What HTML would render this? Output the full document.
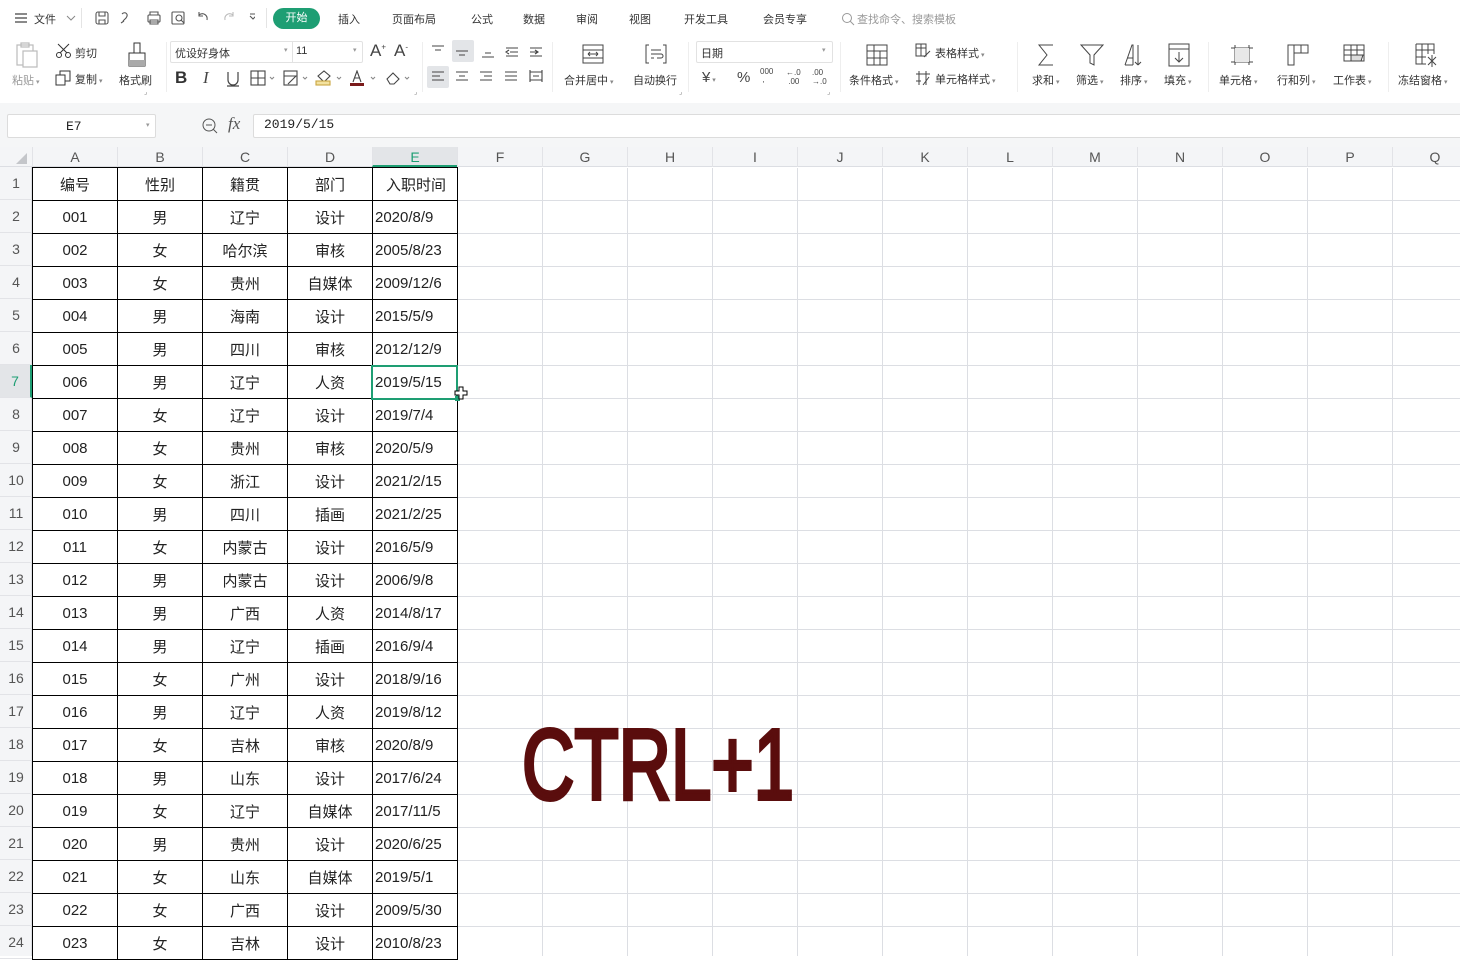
<!DOCTYPE html>
<html><head><meta charset="utf-8">
<style>
*{margin:0;padding:0;box-sizing:border-box}
body{width:1460px;height:956px;overflow:hidden;background:#fff;font-family:"Liberation Sans","Noto Sans CJK SC",sans-serif;color:#222;position:relative}
.a{position:absolute}
.t{position:absolute;font-size:11px;color:#333;white-space:nowrap}
.tab{position:absolute;top:11px;font-size:11px;color:#333}
.ic{position:absolute}
.ic svg{display:block}
.grid{position:absolute;left:33px;top:168px;width:1427px;height:788px;
background-image:repeating-linear-gradient(to right,transparent 0 84px,#dcdee3 84px 85px),repeating-linear-gradient(to bottom,transparent 0 32px,#dcdee3 32px 33px);}
.colh{position:absolute;top:147px;height:20px;background:#f4f5f7;border-bottom:1px solid #dcdee3}
.ch{position:absolute;top:0;width:85px;height:20px;text-align:center;font-size:14px;line-height:20px;color:#555;border-left:1px solid #e2e3e7}
.rowh{position:absolute;left:0;top:167px;width:32px;height:789px;background:#f4f5f7;border-right:1px solid #dcdee3}
.rh{position:absolute;left:0;width:32px;height:33px;line-height:33px;text-align:center;font-size:14px;color:#555;border-bottom:1px solid #e2e3e7}
table{position:absolute;left:32px;top:167px;border-collapse:collapse;table-layout:fixed}
td{border:1px solid #000;width:85px;height:33px;text-align:center;font-size:15px;padding:0;white-space:nowrap;overflow:hidden}
td:last-child{text-align:left;padding-left:2px}
tr:first-child td:last-child{text-align:center}
</style></head><body>
<div class="a" style="left:0;top:0;width:1460px;height:103px;background:#fff;box-shadow:0 2px 3px rgba(0,0,0,.06)"></div>
<div class="ic" style="left:14px;top:12px"><svg width="14" height="12"><path d="M1 2h12M1 6h12M1 10h12" stroke="#444" stroke-width="1.2"/></svg></div>
<div class="tab" style="left:34px">文件</div>
<div class="ic" style="left:66px;top:14px"><svg width="10" height="8"><path d="M1 2l4 4 4-4" stroke="#888" fill="none"/></svg></div>
<div class="a" style="left:81px;top:8px;width:1px;height:20px;background:#e4e4e4"></div>
<div class="ic" style="left:95px;top:10px"><svg width="160" height="16" fill="none" stroke="#555" stroke-width="1.1"><rect x="1" y="2" width="12" height="12" rx="2"/><path d="M4 2v4h6V2M4 14v-4h6v4"/><path d="M27 4c3-3 7 0 4 4l-3 3M26 13l3-2"/><rect x="53" y="5" width="12" height="7" rx="1"/><path d="M55 5V2h8v3M55 10h8v4h-8z"/><rect x="77" y="2" width="12" height="12" rx="1"/><circle cx="84" cy="8" r="3"/><path d="M86 10l3 3"/><path d="M104 5c4-3 9 0 8 5M104 2v4h4"/><path stroke="#bbb" d="M138 5c-4-3-9 0-8 5M138 2v4h-4"/><path d="M155 6l3 3 3-3M155 4h6"/></svg></div>
<div class="a" style="left:266px;top:8px;width:1px;height:20px;background:#e4e4e4"></div>
<div class="a" style="left:273px;top:8px;width:47px;height:21px;border-radius:11px;background:#1e9e73;color:#fff;font-size:11px;line-height:21px;text-align:center">开始</div>
<div class="tab" style="left:338px">插入</div>
<div class="tab" style="left:392px">页面布局</div>
<div class="tab" style="left:471px">公式</div>
<div class="tab" style="left:523px">数据</div>
<div class="tab" style="left:576px">审阅</div>
<div class="tab" style="left:629px">视图</div>
<div class="tab" style="left:684px">开发工具</div>
<div class="tab" style="left:763px">会员专享</div>
<div class="ic" style="left:841px;top:12px"><svg width="14" height="14" fill="none" stroke="#999"><circle cx="6" cy="6" r="4.5"/><path d="M9 9l4 4"/></svg></div>
<div class="tab" style="left:857px;color:#999">查找命令、搜索模板</div>

<div class="ic" style="left:16px;top:42px"><svg width="24" height="26" fill="none" stroke="#bbb" stroke-width="1.2"><rect x="1" y="3" width="16" height="20"/><rect x="7" y="9" width="14" height="16" fill="#fff"/><rect x="5" y="1" width="8" height="4"/></svg></div>
<div class="t" style="left:12px;top:72px;color:#999">粘贴<span style="font-size:7px"> ▾</span></div>
<div class="ic" style="left:55px;top:43px"><svg width="18" height="16" fill="none" stroke="#333"><circle cx="4" cy="12" r="2.5"/><circle cx="13" cy="12" r="2.5"/><path d="M5 10l9-9M12 10L3 1"/></svg></div>
<div class="t" style="left:75px;top:45px">剪切</div>
<div class="ic" style="left:55px;top:70px"><svg width="16" height="16" fill="none" stroke="#333"><rect x="1" y="5" width="9" height="10"/><path d="M5 5V1h10v10h-5"/></svg></div>
<div class="t" style="left:75px;top:71px">复制<span style="font-size:7px;color:#888"> ▾</span></div>
<div class="ic" style="left:126px;top:42px"><svg width="22" height="26" fill="none" stroke="#333"><path d="M8 1h6v10H8zM3 11h16v13H3z"/><rect x="3" y="18" width="16" height="6" fill="#aaa" stroke="none"/></svg></div>
<div class="t" style="left:119px;top:72px">格式刷</div>
<div class="t" style="left:144px;top:88px;font-size:7px;color:#888">⌟</div>
<div class="a" style="left:166px;top:42px;width:1px;height:50px;background:#eee"></div>
<div class="a" style="left:170px;top:41px;width:193px;height:22px;border:1px solid #e2e2e2;border-radius:2px"></div>
<div class="a" style="left:292px;top:41px;width:1px;height:22px;background:#e2e2e2"></div>
<div class="t" style="left:175px;top:45px">优设好身体</div>
<div class="t" style="left:284px;top:46px;font-size:7px;color:#999">▾</div>
<div class="t" style="left:296px;top:45px">11</div>
<div class="t" style="left:353px;top:46px;font-size:7px;color:#999">▾</div>
<div class="t" style="left:370px;top:41px;font-size:17px;color:#444">A<sup style="font-size:8px">+</sup></div>
<div class="t" style="left:394px;top:41px;font-size:17px;color:#444">A<sup style="font-size:8px">-</sup></div>
<div class="t" style="left:175px;top:68px;font-size:17px;font-weight:bold;color:#333">B</div>
<div class="t" style="left:203px;top:68px;font-size:17px;font-style:italic;color:#444;font-family:'Liberation Serif',serif">I</div>
<div class="ic" style="left:226px;top:71px"><svg width="14" height="16" fill="none" stroke="#444" stroke-width="1.2"><path d="M2 1v8a5 5 0 0010 0V1M1 15h12"/></svg></div>
<div class="ic" style="left:250px;top:70px"><svg width="160" height="18" fill="none" stroke="#444" stroke-width="1.1"><rect x="1" y="1" width="14" height="14"/><path d="M8 1v14M1 8h14"/><path d="M20 7l2 2 2-2" stroke="#888"/><rect x="34" y="1" width="13" height="14"/><path d="M34 6h13M38 14l8-8" /><path d="M53 7l2 2 2-2" stroke="#888"/><path d="M68 6l6-5 6 5-6 6z"/><rect x="66" y="11" width="14" height="4" fill="#f3e2a0" stroke="#c9a640"/><path d="M87 7l2 2 2-2" stroke="#888"/><path d="M103 12l4-11 4 11M105 8h5"/><rect x="100" y="13" width="14" height="3" fill="#7a1a1a" stroke="none"/><path d="M121 7l2 2 2-2" stroke="#888"/><path d="M137 9l6-6 6 6-5 5h-4z"/><path d="M155 7l2 2 2-2" stroke="#888"/></svg></div>
<div class="t" style="left:414px;top:88px;font-size:7px;color:#888">⌟</div>
<div class="a" style="left:422px;top:42px;width:1px;height:50px;background:#eee"></div>
<div class="a" style="left:452px;top:40px;width:22px;height:22px;background:#e3e5e8;border-radius:2px"></div>
<div class="a" style="left:427px;top:66px;width:22px;height:22px;background:#e3e5e8;border-radius:2px"></div>
<div class="ic" style="left:430px;top:44px"><svg width="120" height="44" fill="none" stroke="#444" stroke-width="1.1"><path d="M2 2h12M5 6h6M26 7h12M29 11h6M52 13h12M55 9h6M76 4h12M80 8h8M76 12h12M79 6l-3 2 3 2M100 4h12M100 8h8M100 12h12M105 6l3 2-3 2"/><path d="M2 28h12M2 32h8M2 36h12M26 28h12M29 32h6M26 36h12M50 28h12M54 32h8M50 36h12M75 28h12M75 32h12M75 36h12M100 26v12M112 26v12M100 28h12M100 36h12M103 32h6"/></svg></div>
<div class="a" style="left:552px;top:42px;width:1px;height:50px;background:#eee"></div>
<div class="ic" style="left:582px;top:44px"><svg width="22" height="20" fill="none" stroke="#444"><rect x="1" y="1" width="20" height="18"/><path d="M1 6h20M1 14h20M6 10h10M6 10l2-2M6 10l2 2M16 10l-2-2M16 10l-2 2"/></svg></div>
<div class="t" style="left:564px;top:72px">合并居中<span style="font-size:7px;color:#888"> ▾</span></div>
<div class="ic" style="left:645px;top:44px"><svg width="22" height="20" fill="none" stroke="#444"><path d="M4 1H1v18h3M18 1h3v18h-3M6 6h10M6 10h10a2 2 0 010 4h-4M6 14h3"/></svg></div>
<div class="t" style="left:633px;top:72px">自动换行</div>
<div class="t" style="left:679px;top:88px;font-size:7px;color:#888">⌟</div>
<div class="a" style="left:688px;top:42px;width:1px;height:50px;background:#eee"></div>
<div class="a" style="left:696px;top:41px;width:137px;height:22px;border:1px solid #e2e2e2;border-radius:2px"></div>
<div class="t" style="left:701px;top:45px">日期</div>
<div class="t" style="left:822px;top:46px;font-size:7px;color:#999">▾</div>
<div class="t" style="left:702px;top:69px;font-size:15px;color:#444">¥<span style="font-size:7px;color:#888"> ▾</span></div>
<div class="t" style="left:737px;top:69px;font-size:15px;color:#444">%</div>
<div class="t" style="left:760px;top:68px;font-size:8px;line-height:8px;color:#444">000<br>&nbsp;,</div>
<div class="t" style="left:786px;top:68px;font-size:8px;line-height:9px;color:#444">←.0<br>&nbsp;.00</div>
<div class="t" style="left:812px;top:68px;font-size:8px;line-height:9px;color:#444">.00<br>→.0</div>
<div class="t" style="left:827px;top:88px;font-size:7px;color:#888">⌟</div>
<div class="a" style="left:840px;top:42px;width:1px;height:50px;background:#eee"></div>
<div class="ic" style="left:866px;top:44px"><svg width="22" height="22" fill="none" stroke="#444"><rect x="1" y="1" width="20" height="20"/><path d="M1 7h20M1 14h20M8 1v20M14 7v14"/></svg></div>
<div class="t" style="left:849px;top:72px">条件格式<span style="font-size:7px;color:#888"> ▾</span></div>
<div class="ic" style="left:915px;top:43px"><svg width="16" height="16" fill="none" stroke="#444"><rect x="1" y="1" width="10" height="12"/><path d="M1 5h10M6 1v12M9 14l6-6"/></svg></div>
<div class="t" style="left:935px;top:45px">表格样式<span style="font-size:7px;color:#888"> ▾</span></div>
<div class="ic" style="left:915px;top:70px"><svg width="16" height="16" fill="none" stroke="#444"><path d="M4 1v14M11 1v14M1 4h14M1 11h5M8 15l6-8"/></svg></div>
<div class="t" style="left:935px;top:71px">单元格样式<span style="font-size:7px;color:#888"> ▾</span></div>
<div class="a" style="left:1017px;top:42px;width:1px;height:50px;background:#eee"></div>
<div class="ic" style="left:1036px;top:44px"><svg width="22" height="22" fill="none" stroke="#444"><path d="M17 1H3l8 10-8 10h14"/></svg></div>
<div class="t" style="left:1032px;top:72px">求和<span style="font-size:7px;color:#888"> ▾</span></div>
<div class="ic" style="left:1080px;top:44px"><svg width="24" height="22" fill="none" stroke="#444"><path d="M1 1h22l-9 10v10l-4-2v-8z"/></svg></div>
<div class="t" style="left:1076px;top:72px">筛选<span style="font-size:7px;color:#888"> ▾</span></div>
<div class="ic" style="left:1124px;top:44px"><svg width="24" height="22" fill="none" stroke="#444"><path d="M1 21L8 1h1v20M3 14h6M14 1v20M14 21l-3-3M14 21l3-3M1 21h8"/></svg></div>
<div class="t" style="left:1120px;top:72px">排序<span style="font-size:7px;color:#888"> ▾</span></div>
<div class="ic" style="left:1168px;top:43px"><svg width="22" height="24" fill="none" stroke="#444"><rect x="1" y="1" width="20" height="22"/><path d="M1 6h20M11 9v10M7 15l4 4 4-4"/></svg></div>
<div class="t" style="left:1164px;top:72px">填充<span style="font-size:7px;color:#888"> ▾</span></div>
<div class="a" style="left:1208px;top:42px;width:1px;height:50px;background:#eee"></div>
<div class="ic" style="left:1230px;top:44px"><svg width="24" height="22" fill="none" stroke="#444"><path d="M5 1v20M19 1v20M1 4h22M1 18h22"/><rect x="5" y="4" width="14" height="14" fill="#e8e8e8" stroke="none"/></svg></div>
<div class="t" style="left:1219px;top:72px">单元格<span style="font-size:7px;color:#888"> ▾</span></div>
<div class="ic" style="left:1287px;top:44px"><svg width="22" height="22" fill="none" stroke="#444"><path d="M1 21V1h20v8H7v12zM7 1v8M14 1v8"/></svg></div>
<div class="t" style="left:1277px;top:72px">行和列<span style="font-size:7px;color:#888"> ▾</span></div>
<div class="ic" style="left:1343px;top:44px"><svg width="22" height="22" fill="none" stroke="#444"><rect x="1" y="1" width="20" height="16"/><path d="M1 6h20M1 11h20M8 1v16M14 1v16"/><path d="M8 11h12l-2 6H8z" fill="#ddd"/></svg></div>
<div class="t" style="left:1333px;top:72px">工作表<span style="font-size:7px;color:#888"> ▾</span></div>
<div class="a" style="left:1388px;top:42px;width:1px;height:50px;background:#eee"></div>
<div class="ic" style="left:1415px;top:43px"><svg width="24" height="24" fill="none" stroke="#444"><path d="M1 1h18v10M1 1v20h10M1 7h18M1 14h10M7 1v20M13 1v10M13 14l8 8M21 14l-8 8M17 12v12"/></svg></div>
<div class="t" style="left:1398px;top:72px">冻结窗格<span style="font-size:7px;color:#888"> ▾</span></div>

<div class="a" style="left:0;top:103px;width:1460px;height:44px;background:#f5f6f7"></div>
<div class="a" style="left:7px;top:114px;width:149px;height:24px;background:#fff;border:1px solid #dcdcdc;border-radius:2px"></div>
<div class="t" style="left:66px;top:119px;font-size:13px;font-family:'Liberation Mono',monospace;color:#222">E7</div>
<div class="t" style="left:146px;top:121px;font-size:7px;color:#999">▾</div>
<div class="ic" style="left:201px;top:117px"><svg width="18" height="18" fill="none" stroke="#555"><circle cx="8" cy="8" r="6"/><path d="M5 8h6M12 12l4 4"/></svg></div>
<div class="t" style="left:228px;top:114px;font-size:17px;font-style:italic;font-family:'Liberation Serif',serif;color:#555">fx</div>
<div class="a" style="left:253px;top:114px;width:1210px;height:24px;background:#fff;border:1px solid #dcdcdc;border-radius:2px"></div>
<div class="t" style="left:264px;top:117px;font-size:13px;font-family:'Liberation Mono',monospace;color:#222">2019/5/15</div>

<div class="colh" style="left:0;width:1460px">
<div class="a" style="left:16px;top:6px;width:0;height:0;border-left:11px solid transparent;border-bottom:11px solid #c4c6ca"></div>
<div class="ch" style="left:32px">A</div><div class="ch" style="left:117px">B</div><div class="ch" style="left:202px">C</div><div class="ch" style="left:287px">D</div>
<div class="ch" style="left:372px;background:#e3e5e8;color:#1e9e73;border-bottom:2px solid #1e9e73">E</div>
<div class="ch" style="left:457px">F</div><div class="ch" style="left:542px">G</div><div class="ch" style="left:627px">H</div><div class="ch" style="left:712px">I</div><div class="ch" style="left:797px">J</div><div class="ch" style="left:882px">K</div><div class="ch" style="left:967px">L</div><div class="ch" style="left:1052px">M</div><div class="ch" style="left:1137px">N</div><div class="ch" style="left:1222px">O</div><div class="ch" style="left:1307px">P</div><div class="ch" style="left:1392px">Q</div>
</div>
<div class="rowh">
<div class="rh" style="top:0">1</div><div class="rh" style="top:33px">2</div><div class="rh" style="top:66px">3</div><div class="rh" style="top:99px">4</div><div class="rh" style="top:132px">5</div><div class="rh" style="top:165px">6</div>
<div class="rh" style="top:198px;background:#e3e5e8;color:#1e9e73;border-right:2px solid #1e9e73">7</div>
<div class="rh" style="top:231px">8</div><div class="rh" style="top:264px">9</div><div class="rh" style="top:297px">10</div><div class="rh" style="top:330px">11</div><div class="rh" style="top:363px">12</div><div class="rh" style="top:396px">13</div><div class="rh" style="top:429px">14</div><div class="rh" style="top:462px">15</div><div class="rh" style="top:495px">16</div><div class="rh" style="top:528px">17</div><div class="rh" style="top:561px">18</div><div class="rh" style="top:594px">19</div><div class="rh" style="top:627px">20</div><div class="rh" style="top:660px">21</div><div class="rh" style="top:693px">22</div><div class="rh" style="top:726px">23</div><div class="rh" style="top:759px">24</div>
</div>
<div class="grid"></div>
<table>
<tr><td>编号</td><td>性别</td><td>籍贯</td><td>部门</td><td>入职时间</td></tr>
<tr><td>001</td><td>男</td><td>辽宁</td><td>设计</td><td>2020/8/9</td></tr>
<tr><td>002</td><td>女</td><td>哈尔滨</td><td>审核</td><td>2005/8/23</td></tr>
<tr><td>003</td><td>女</td><td>贵州</td><td>自媒体</td><td>2009/12/6</td></tr>
<tr><td>004</td><td>男</td><td>海南</td><td>设计</td><td>2015/5/9</td></tr>
<tr><td>005</td><td>男</td><td>四川</td><td>审核</td><td>2012/12/9</td></tr>
<tr><td>006</td><td>男</td><td>辽宁</td><td>人资</td><td>2019/5/15</td></tr>
<tr><td>007</td><td>女</td><td>辽宁</td><td>设计</td><td>2019/7/4</td></tr>
<tr><td>008</td><td>女</td><td>贵州</td><td>审核</td><td>2020/5/9</td></tr>
<tr><td>009</td><td>女</td><td>浙江</td><td>设计</td><td>2021/2/15</td></tr>
<tr><td>010</td><td>男</td><td>四川</td><td>插画</td><td>2021/2/25</td></tr>
<tr><td>011</td><td>女</td><td>内蒙古</td><td>设计</td><td>2016/5/9</td></tr>
<tr><td>012</td><td>男</td><td>内蒙古</td><td>设计</td><td>2006/9/8</td></tr>
<tr><td>013</td><td>男</td><td>广西</td><td>人资</td><td>2014/8/17</td></tr>
<tr><td>014</td><td>男</td><td>辽宁</td><td>插画</td><td>2016/9/4</td></tr>
<tr><td>015</td><td>女</td><td>广州</td><td>设计</td><td>2018/9/16</td></tr>
<tr><td>016</td><td>男</td><td>辽宁</td><td>人资</td><td>2019/8/12</td></tr>
<tr><td>017</td><td>女</td><td>吉林</td><td>审核</td><td>2020/8/9</td></tr>
<tr><td>018</td><td>男</td><td>山东</td><td>设计</td><td>2017/6/24</td></tr>
<tr><td>019</td><td>女</td><td>辽宁</td><td>自媒体</td><td>2017/11/5</td></tr>
<tr><td>020</td><td>男</td><td>贵州</td><td>设计</td><td>2020/6/25</td></tr>
<tr><td>021</td><td>女</td><td>山东</td><td>自媒体</td><td>2019/5/1</td></tr>
<tr><td>022</td><td>女</td><td>广西</td><td>设计</td><td>2009/5/30</td></tr>
<tr><td>023</td><td>女</td><td>吉林</td><td>设计</td><td>2010/8/23</td></tr>
</table>
<div class="a" style="left:371px;top:365px;width:87px;height:35px;border:2px solid #1e9e73"></div>
<div class="a" style="left:455px;top:396px;width:5px;height:5px;background:#1e9e73"></div>
<div class="ic" style="left:454px;top:386px"><svg width="15" height="15"><path d="M5 1h4v4h4v4H9v4H5V9H1V5h4z" fill="#fff" stroke="#000"/></svg></div>
<svg class="a" style="left:515px;top:718px" width="290" height="92"><text x="7" y="81" font-family="'Liberation Sans Narrow','Liberation Sans',sans-serif" font-size="100" fill="#5a0d0d" stroke="#5a0d0d" stroke-width="4" stroke-linejoin="miter" textLength="272" lengthAdjust="spacingAndGlyphs">CTRL+1</text></svg>
</body></html>
